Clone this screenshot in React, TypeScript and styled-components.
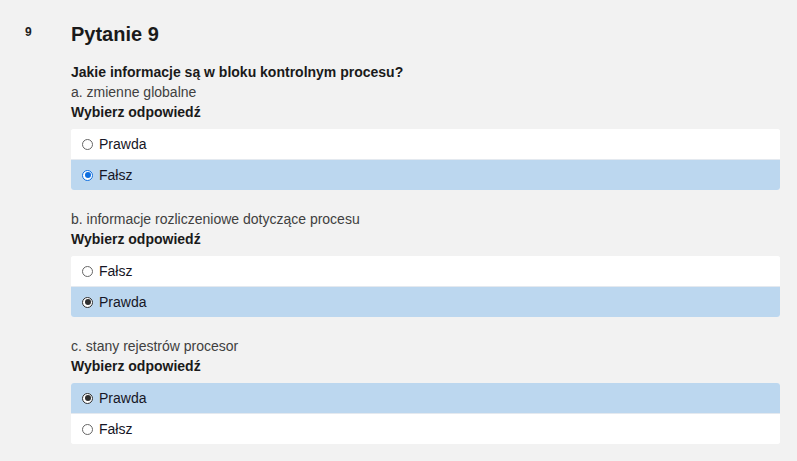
import styled, { createGlobalStyle } from "styled-components";

const GlobalStyle = createGlobalStyle`
  html, body {
    margin: 0;
    padding: 0;
    background: #f2f2f2;
  }
  body {
    font-family: "Liberation Sans", Arial, sans-serif;
    color: #1d1d1d;
  }
`;

const Page = styled.div`
  display: flex;
  padding: 20px 17px 0 25px;
  min-height: 461px;
  box-sizing: border-box;
`;

const Number = styled.div`
  width: 46px;
  flex-shrink: 0;
  font-size: 12px;
  font-weight: bold;
  line-height: 24px;
  color: #1d1d1d;
`;

const Content = styled.div`
  flex: 1;
`;

const Title = styled.h2`
  margin: 0 0 14px;
  font-size: 20px;
  line-height: 28px;
  font-weight: bold;
  color: #1a1a1a;
`;

const Line = styled.div<{ $bold?: boolean }>`
  font-size: 14px;
  line-height: 20px;
  font-weight: ${(p) => (p.$bold ? "bold" : "normal")};
  color: ${(p) => (p.$bold ? "#1a1a1a" : "#404040")};
`;

const Block = styled.div`
  margin-bottom: 19px;
`;

const Options = styled.div`
  margin-top: 7px;
  border-radius: 3px;
  overflow: hidden;
  background: #fff;
`;

const Option = styled.label<{ $selected?: boolean }>`
  display: flex;
  align-items: center;
  gap: 6px;
  height: 30px;
  padding-left: 11px;
  background: ${(p) => (p.$selected ? "#bcd7ef" : "#fff")};
  font-size: 14px;
  color: #161626;
  & + & {
    border-top: 1px solid #e4e9ef;
  }
`;

const Radio = styled.span<{ $checked?: boolean; $color?: string }>`
  width: 11px;
  height: 11px;
  border-radius: 50%;
  box-sizing: border-box;
  border: 1px solid ${(p) => (p.$checked ? p.$color || "#333" : "#666")};
  background: #fff;
  display: inline-flex;
  align-items: center;
  justify-content: center;
  &::after {
    content: "";
    display: ${(p) => (p.$checked ? "block" : "none")};
    width: 6px;
    height: 6px;
    border-radius: 50%;
    background: ${(p) => p.$color || "#333"};
  }
`;

type Opt = { label: string; checked: boolean };

const questions: { text: string; options: Opt[]; accent: string }[] = [
  {
    text: "a. zmienne globalne",
    accent: "#0f6fe0",
    options: [
      { label: "Prawda", checked: false },
      { label: "Fałsz", checked: true },
    ],
  },
  {
    text: "b. informacje rozliczeniowe dotyczące procesu",
    accent: "#2f2f2f",
    options: [
      { label: "Fałsz", checked: false },
      { label: "Prawda", checked: true },
    ],
  },
  {
    text: "c. stany rejestrów procesor",
    accent: "#2f2f2f",
    options: [
      { label: "Prawda", checked: true },
      { label: "Fałsz", checked: false },
    ],
  },
];

export default function App() {
  return (
    <>
      <GlobalStyle />
      <Page>
        <Number>9</Number>
        <Content>
          <Title>Pytanie 9</Title>
          <Line $bold>Jakie informacje są w bloku kontrolnym procesu?</Line>
          {questions.map((q) => (
            <Block key={q.text}>
              <Line>{q.text}</Line>
              <Line $bold>Wybierz odpowiedź</Line>
              <Options>
                {q.options.map((o) => (
                  <Option key={o.label} $selected={o.checked}>
                    <Radio $checked={o.checked} $color={q.accent} />
                    {o.label}
                  </Option>
                ))}
              </Options>
            </Block>
          ))}
        </Content>
      </Page>
    </>
  );
}
